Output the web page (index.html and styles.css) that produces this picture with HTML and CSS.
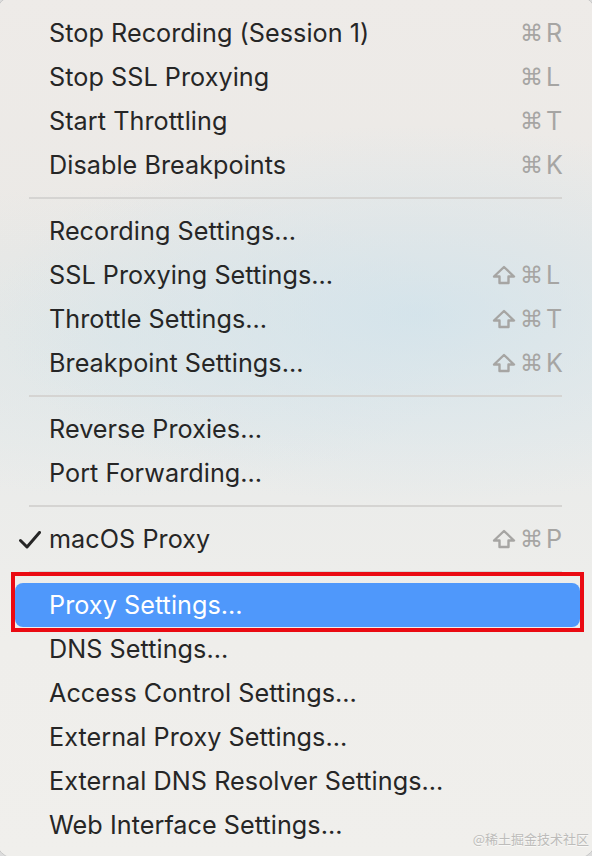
FILE: index.html
```html
<!DOCTYPE html>
<html lang="en">
<head>
    <meta charset="UTF-8">
    <title>Proxy Menu</title>
    <link rel="stylesheet" href="styles.css">
</head>
<body>

<div class="menu">
    <div class="item"><span class="label">Stop Recording (Session 1)</span><span class="keys"><span class="cmd">⌘</span><span class="key">R</span></span></div>
    <div class="item"><span class="label">Stop SSL Proxying</span><span class="keys"><span class="cmd">⌘</span><span class="key">L</span></span></div>
    <div class="item"><span class="label">Start Throttling</span><span class="keys"><span class="cmd">⌘</span><span class="key">T</span></span></div>
    <div class="item"><span class="label">Disable Breakpoints</span><span class="keys"><span class="cmd">⌘</span><span class="key">K</span></span></div>
    <div class="sep"></div>

    <div class="item"><span class="label">Recording Settings…</span></div>
    <div class="item"><span class="label">SSL Proxying Settings…</span><span class="keys"><svg class="shift" viewBox="0 0 24 20"><path d="M12 2 L22 11.5 H16.5 V18 H7.5 V11.5 H2 Z"/></svg><span class="cmd">⌘</span><span class="key">L</span></span></div>
    <div class="item"><span class="label">Throttle Settings…</span><span class="keys"><svg class="shift" viewBox="0 0 24 20"><path d="M12 2 L22 11.5 H16.5 V18 H7.5 V11.5 H2 Z"/></svg><span class="cmd">⌘</span><span class="key">T</span></span></div>
    <div class="item"><span class="label">Breakpoint Settings…</span><span class="keys"><svg class="shift" viewBox="0 0 24 20"><path d="M12 2 L22 11.5 H16.5 V18 H7.5 V11.5 H2 Z"/></svg><span class="cmd">⌘</span><span class="key">K</span></span></div>
    <div class="sep"></div>

    <div class="item"><span class="label">Reverse Proxies…</span></div>
    <div class="item"><span class="label">Port Forwarding…</span></div>
    <div class="sep"></div>

    <div class="item">
        <svg class="check" viewBox="0 0 22 18"><path d="M1.5 9.5 L8 16 L20.5 1.5"/></svg>
        <span class="label">macOS Proxy</span><span class="keys"><svg class="shift" viewBox="0 0 24 20"><path d="M12 2 L22 11.5 H16.5 V18 H7.5 V11.5 H2 Z"/></svg><span class="cmd">⌘</span><span class="key">P</span></span>
    </div>
    <div class="sep"></div>

    <div class="item active"><span class="label">Proxy Settings…</span><span class="mark"></span></div>
    <div class="item"><span class="label">DNS Settings…</span></div>
    <div class="item"><span class="label">Access Control Settings…</span></div>
    <div class="item"><span class="label">External Proxy Settings…</span></div>
    <div class="item"><span class="label">External DNS Resolver Settings…</span></div>
    <div class="item"><span class="label">Web Interface Settings…</span></div>

    <div class="watermark">@稀土掘金技术社区</div>
</div>

</body>
</html>
```

FILE: styles.css
```css
html, body {
    margin: 0;
    padding: 0;
    height: 100%;
}
body {
    background-color: #dcdcdc;
    overflow: hidden;
    font-family: Inter, "Noto Sans", sans-serif;
}
.menu {
    position: relative;
    margin: -6px -6px 0;
    padding: 16px 6px 12px;
    border: 1px solid #c8c8c8;
    border-radius: 24px;
    background:
        radial-gradient(ellipse 70% 22% at 70% 37%, rgba(206, 226, 236, 0.75), rgba(206, 226, 236, 0) 100%),
        radial-gradient(ellipse 60% 18% at 20% 40%, rgba(214, 228, 232, 0.5), rgba(214, 228, 232, 0) 100%),
        linear-gradient(#eeebe8, #ebe9e6 30%, #e9ebea 50%, #efeeeb 75%, #f0efec);
}
.item {
    position: relative;
    display: flex;
    align-items: center;
    height: 44px;
    padding: 0 25px 0 48px;
    color: #262626;
    font-size: 25.2px;
    letter-spacing: 0.05px;
}
.label {
    white-space: nowrap;
}
.keys {
    margin-left: auto;
    display: flex;
    align-items: center;
    color: #a6a5a3;
}
.cmd {
    font-family: "DejaVu Sans", sans-serif;
    font-size: 23px;
    width: 21px;
    text-align: center;
    margin-right: 5px;
}
.key {
    width: 20px;
    font-size: 25.2px;
}
.shift {
    width: 24px;
    height: 20px;
    margin-right: 4px;
    fill: none;
    stroke: #a6a5a3;
    stroke-width: 2.4;
    stroke-linejoin: round;
}
.check {
    position: absolute;
    left: 18px;
    top: 14px;
    width: 22px;
    height: 18px;
    fill: none;
    stroke: #262626;
    stroke-width: 3;
    stroke-linecap: round;
    stroke-linejoin: round;
}
.sep {
    height: 22px;
    display: flex;
    align-items: center;
    padding: 0 29px 0 28px;
}
.sep::before {
    content: "";
    flex: 1;
    height: 2px;
    background-color: #d5d4d2;
}
.item.active {
    margin: 0 11px 0 14px;
    padding-left: 34px;
    background-color: #4f98fb;
    border-radius: 8px;
    color: #ffffff;
}
.mark {
    position: absolute;
    left: -4px;
    right: -4px;
    top: -11px;
    bottom: -5px;
    border: 4px solid #ea0a12;
    pointer-events: none;
}
.watermark {
    position: absolute;
    right: 8px;
    bottom: 11px;
    font-family: "Noto Sans CJK SC", sans-serif;
    font-size: 13px;
    color: #bdbcba;
    text-shadow: 0 1px 0 rgba(255, 255, 255, 0.6);
}
```
